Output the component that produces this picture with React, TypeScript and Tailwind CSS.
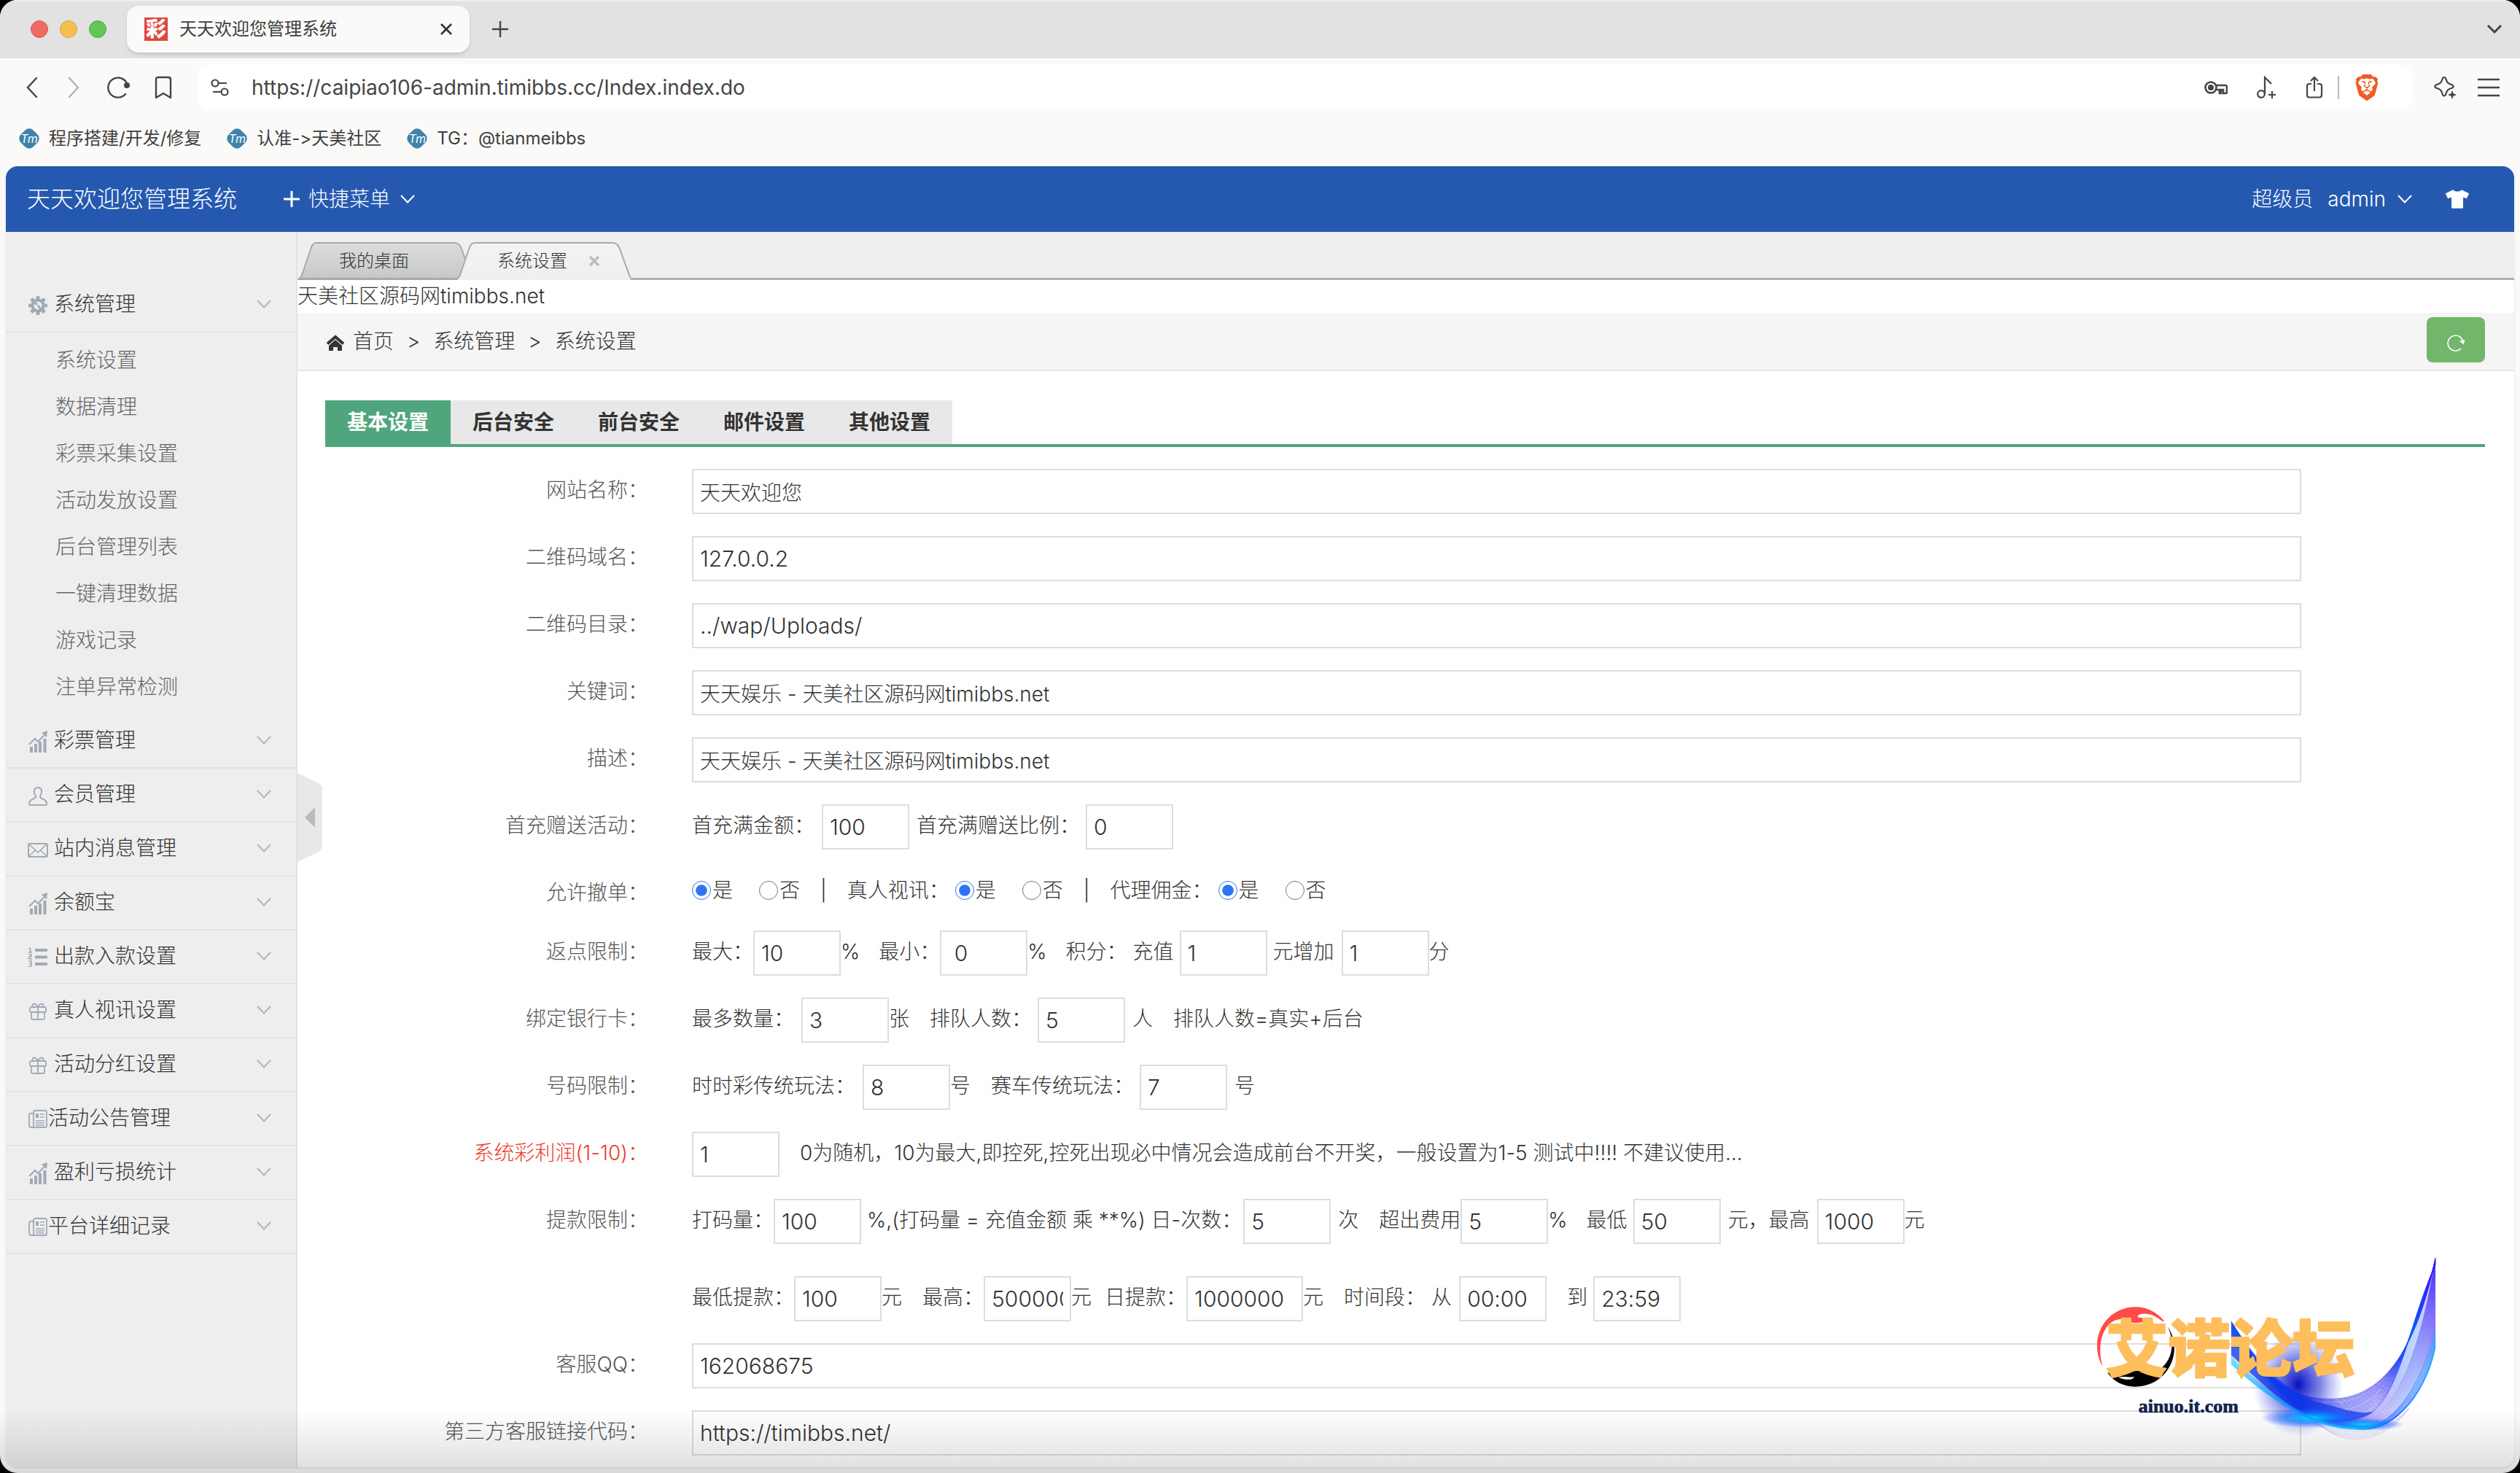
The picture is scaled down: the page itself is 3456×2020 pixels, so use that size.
import type { ReactNode } from "react";
import clsx from "clsx";
import { FaTshirt } from "react-icons/fa";
import { SiBrave } from "react-icons/si";

/* ---------- icons ---------- */

type IconProps = { className?: string };

function ChevronDown({ className }: IconProps) {
  return (
    <svg viewBox="0 0 20 12" className={className} fill="none" stroke="currentColor" strokeWidth="2">
      <path d="M1 1l9 9.500 9-9.500" />
    </svg>
  );
}

function GearIcon() {
  return (
    <svg viewBox="0 0 28 28" className="size-7">
      <g fill="currentColor">
        {[0, 45, 90, 135, 180, 225, 270, 315].map((a) => (
          <rect key={a} x="11.500" y="1" width="5" height="7" rx="1.500" transform={`rotate(${a} 14 14)`} />
        ))}
      </g>
      <circle cx="14" cy="14" r="7.500" fill="none" stroke="currentColor" strokeWidth="4" />
      <path d="M10 10l3 3m1 1l8 10" stroke="currentColor" strokeWidth="3" />
    </svg>
  );
}

function ChartIcon() {
  return (
    <svg viewBox="0 0 28 30" className="h-[30px] w-7">
      <path d="M3 22h4v8H3zM9 18h4v12H9zM15 15h4v15h-4zM21.500 11h4v19h-4z" fill="currentColor" />
      <path d="M2 19l8-8 4 4 9-9" fill="none" stroke="currentColor" strokeWidth="2" />
      <path d="M27 0l-1 9-7-6z" fill="currentColor" />
    </svg>
  );
}

function UserIcon() {
  return (
    <svg viewBox="0 0 28 28" className="size-7" fill="none" stroke="currentColor" strokeWidth="2">
      <path d="M14 3c-4 0-5.500 3-5 6.500.2 2 .6 3 1.800 4.500 1 2-.3 3-2.300 4C4.500 20 2 21 2 25.500c0 .9.500 1.500 1.500 1.500h21c1 0 1.500-.6 1.500-1.500 0-4.500-2.500-5.500-6.500-7.500-2-1-3.300-2-2.300-4 1.200-1.500 1.600-2.500 1.800-4.500C19.500 6 18 3 14 3z" />
    </svg>
  );
}

function MailIcon() {
  return (
    <svg viewBox="0 0 28 28" className="size-7" fill="none" stroke="currentColor" strokeWidth="1.600">
      <rect x="1" y="6" width="26" height="18" rx="2" strokeWidth="2" />
      <path d="M2 7l12 11L26 7M2 23l8.500-8M26 23l-8.500-8" />
    </svg>
  );
}

function ListIcon() {
  return (
    <svg viewBox="0 0 28 28" className="size-7" fill="none" stroke="currentColor">
      <path d="M10 4h17M10 13.500h17M10 23h17" strokeWidth="4" />
      <path d="M1.500 1.500h2V7M1 7h5M1 10h4v3H2v3h4M1 19h4v7H1M2 22.500h3" strokeWidth="1.600" />
    </svg>
  );
}

function GiftIcon() {
  return (
    <svg viewBox="0 0 28 28" className="size-7" fill="none" stroke="currentColor" strokeWidth="1.800">
      <rect x="3" y="8" width="22" height="7" rx="2" />
      <path d="M5 15v8.500c0 1 .5 1.500 1.500 1.500h15c1 0 1.500-.5 1.500-1.500V15M14 8v17M14 8C12 3 6 2 6.500 6c.1 1 1 2 2 2M14 8c2-5 8-6 7.500-2-.1 1-1 2-2 2" />
    </svg>
  );
}

function NewsIcon() {
  return (
    <svg viewBox="0 0 28 28" className="size-7" fill="none" stroke="currentColor" strokeWidth="1.800">
      <rect x="8" y="2" width="18" height="23" rx="2" />
      <path d="M8 6H4C3 6 2 7 2 8v14c0 2 1 3 3 3h6" />
      <path d="M17 7h6M17 11h6M11 16h12M11 19h12M11 22h12" strokeWidth="1.600" />
      <path d="M11 6h4v6h-4z" fill="currentColor" stroke="none" />
    </svg>
  );
}

function BookmarkLogo() {
  return (
    <span className="relative flex size-[30px] items-center justify-center">
      <span className="absolute size-6 rotate-45 rounded-lg bg-[#3f83aa]" />
      <span className="relative text-base leading-none text-white italic">Tm</span>
    </span>
  );
}

/* ---------- browser chrome ---------- */

function TitleBar() {
  return (
    <div className="flex h-20 items-center border-t-2 border-[#efefef] bg-[#e2e2e2] pr-6 pb-[2px] pl-[42px]">
      <div className="flex gap-4">
        <span className="size-6 rounded-full border border-[#d8574c] bg-[#ed6b60]" />
        <span className="size-6 rounded-full border border-[#d9a33e] bg-[#f5bf4f]" />
        <span className="size-6 rounded-full border border-[#51a83f] bg-[#62c655]" />
      </div>
      <div className="ml-7 flex h-16 w-[470px] items-center rounded-2xl bg-[#fbfaf8] pr-5 pl-6 shadow-md">
        <span className="flex size-8 items-center justify-center bg-[#e0463d] text-[28px] leading-none font-black text-white">彩</span>
        <span className="ml-4 flex-1 text-2xl text-[#404040]">天天欢迎您管理系统</span>
        <button aria-label="Close tab" className="p-1 text-[#333]">
          <svg viewBox="0 0 16 16" className="size-4" stroke="currentColor" strokeWidth="2.600"><path d="M1 1l14 14M15 1L1 15" /></svg>
        </button>
      </div>
      <button aria-label="New tab" className="ml-[31px] text-[#444]">
        <svg viewBox="0 0 22 22" className="size-[22px]" stroke="currentColor" strokeWidth="2.400"><path d="M11 0v22M0 11h22" /></svg>
      </button>
      <button aria-label="Search tabs" className="ml-auto text-[#444]">
        <svg viewBox="0 0 22 14" className="h-[14px] w-[22px]" fill="none" stroke="currentColor" strokeWidth="3"><path d="M2 2l9 9 9-9" /></svg>
      </button>
    </div>
  );
}

function AddressBar() {
  return (
    <div className="flex h-20 items-center pr-7 pl-8 text-[#454545]">
      <div className="flex w-[204px] items-center justify-between">
        <button aria-label="Back">
          <svg viewBox="0 0 24 32" className="h-8 w-6" fill="none" stroke="currentColor" strokeWidth="2.400" strokeLinecap="round"><path d="M18 3L6 16l12 13" /></svg>
        </button>
        <button aria-label="Forward" className="text-[#b4b3b1]">
          <svg viewBox="0 0 24 32" className="h-8 w-6" fill="none" stroke="currentColor" strokeWidth="2.400" strokeLinecap="round"><path d="M6 3l12 13L6 29" /></svg>
        </button>
        <button aria-label="Reload">
          <svg viewBox="0 0 32 32" className="size-8" fill="none" stroke="currentColor" strokeWidth="2.400" strokeLinecap="round">
            <path d="M25 25A13.500 13.500 0 1 1 26 8.500" />
            <circle cx="27" cy="13" r="4" fill="currentColor" stroke="none" />
          </svg>
        </button>
        <button aria-label="Bookmark">
          <svg viewBox="0 0 24 32" className="h-8 w-6" fill="none" stroke="currentColor" strokeWidth="2.400" strokeLinejoin="round"><path d="M2 30V5c0-2 1-3 3-3h14c2 0 3 1 3 3v25l-10-6z" /></svg>
        </button>
      </div>
      <div className="ml-[35px] flex h-16 flex-1 items-center rounded-2xl bg-white pr-[44px] pl-[18px]">
        <svg viewBox="0 0 26 26" className="size-[26px]" fill="none" stroke="currentColor" strokeWidth="2.200">
          <circle cx="6" cy="7" r="4.500" />
          <circle cx="19" cy="19" r="4.500" />
          <path d="M11 7h11M3 19h11" />
        </svg>
        <input aria-label="Address" defaultValue="https://caipiao106-admin.timibbs.cc/Index.index.do" className="ml-[30px] flex-1 bg-transparent text-[28px] text-[#454545] outline-none" />
        <div className="flex items-center">
          <svg viewBox="0 0 32 20" className="h-5 w-8" fill="none" stroke="currentColor" strokeWidth="2.600">
            <path d="M16 7h13c1 0 2 1 2 2v7c0 1-.5 2-2 2h-3v-5h-3v5h-2v-5h-5" />
            <circle cx="9" cy="10" r="7.500" />
            <circle cx="9" cy="10" r="4" fill="currentColor" stroke="none" />
          </svg>
          <svg viewBox="0 0 28 32" className="ml-[39px] h-8 w-7" fill="none" stroke="currentColor" strokeWidth="2.200">
            <circle cx="7" cy="25" r="4.800" />
            <path d="M12 25V2l9 9M22 21v10M17 26h10" />
          </svg>
          <svg viewBox="0 0 24 32" className="ml-10 h-8 w-6" fill="none" stroke="currentColor" strokeWidth="2.200">
            <path d="M8 11H5c-2 0-3 1-3 3v12c0 2 1 3.500 3 3.500h14c2 0 3-1.500 3-3.500V14c0-2-1-3-3-3h-3M12 21V2M7 7l5-5 5 5" />
          </svg>
          <span className="ml-5 h-8 w-[2px] bg-[#bbb]" />
          <SiBrave className="ml-5 size-9 text-[#f15a22]" />
        </div>
      </div>
      <button aria-label="Leo" className="ml-[30px]">
        <svg viewBox="0 0 32 32" className="size-8" fill="none" stroke="currentColor" strokeWidth="2.200" strokeLinejoin="round">
          <path d="M14 2c1.500 0 2 .8 2.500 2.500 1.500 5 2.500 6 7.500 7.500 3.500 1 3.500 4 0 5-5 1.500-6 2.500-7.500 7.500-1 4-4 4-5 0-1.500-5-2.500-6-7.500-7.500-3.500-1-3.500-4 0-5 5-1.500 6-2.500 7.500-7.500C12 2.800 12.500 2 14 2z" />
          <path d="M25 21c.8 3.500 1.500 4.200 5 5-3.500.8-4.200 1.500-5 5-.8-3.500-1.500-4.200-5-5 3.500-.8 4.200-1.500 5-5z" fill="currentColor" strokeWidth="1" />
        </svg>
      </button>
      <button aria-label="Menu" className="ml-7">
        <svg viewBox="0 0 30 26" className="h-[26px] w-[30px]" stroke="currentColor" strokeWidth="2.400"><path d="M0 2h30M0 13h30M0 24h30" /></svg>
      </button>
    </div>
  );
}

const bookmarks = ["程序搭建/开发/修复", "认准->天美社区", "TG：@tianmeibbs"];

function BookmarksBar() {
  return (
    <div className="flex h-[68px] items-start gap-[34px] pt-[15px] pl-[25px]">
      {bookmarks.map((b) => (
        <a key={b} href="#" className="flex items-center gap-3 text-2xl leading-[30px] text-[#404040]">
          <BookmarkLogo />
          {b}
        </a>
      ))}
    </div>
  );
}

/* ---------- admin page ---------- */

function PageHeader() {
  return (
    <header className="flex h-[90px] items-center bg-[#2559b0] pr-[62px] pl-[29px] text-[28px] text-white">
      <h1 className="text-[32px]">天天欢迎您管理系统</h1>
      <button className="ml-16 flex items-center">
        <svg viewBox="0 0 22 22" className="size-[22px]" stroke="currentColor" strokeWidth="3"><path d="M11 0v22M0 11h22" /></svg>
        <span className="ml-3">快捷菜单</span>
        <ChevronDown className="ml-[14px] h-3 w-5" />
      </button>
      <div className="ml-auto flex items-center">
        <span>超级员</span>
        <button className="ml-5 flex items-center">
          admin
          <ChevronDown className="ml-4 h-3 w-5" />
        </button>
        <button aria-label="Skin" className="ml-[46px]">
          <FaTshirt className="size-8" />
        </button>
      </div>
    </header>
  );
}

const systemLinks = ["系统设置", "数据清理", "彩票采集设置", "活动发放设置", "后台管理列表", "一键清理数据", "游戏记录", "注单异常检测"];

const sections: { label: string; icon: ReactNode; tight?: boolean }[] = [
  { label: "彩票管理", icon: <ChartIcon /> },
  { label: "会员管理", icon: <UserIcon /> },
  { label: "站内消息管理", icon: <MailIcon /> },
  { label: "余额宝", icon: <ChartIcon /> },
  { label: "出款入款设置", icon: <ListIcon /> },
  { label: "真人视讯设置", icon: <GiftIcon /> },
  { label: "活动分红设置", icon: <GiftIcon /> },
  { label: "活动公告管理", icon: <NewsIcon />, tight: true },
  { label: "盈利亏损统计", icon: <ChartIcon /> },
  { label: "平台详细记录", icon: <NewsIcon />, tight: true },
];

function SectionHead({ label, icon, tight }: { label: string; icon: ReactNode; tight?: boolean }) {
  return (
    <button className="flex h-[74px] w-full items-center border-b-2 border-[#e3e3e3] pr-[34px] pb-[2px] pl-[30px] text-left text-[#333]">
      <span className="pt-1 text-[#a2a9b6]">{icon}</span>
      <span className={tight ? "" : "ml-2"}>{label}</span>
      <ChevronDown className="ml-auto h-3 w-5 text-[#b5b5b5]" />
    </button>
  );
}

function Sidebar() {
  return (
    <aside className="w-[400px] shrink-0 border-r-2 border-[#e3e3e3] bg-[#eee] pt-16 text-[28px]">
      <SectionHead label="系统管理" icon={<GearIcon />} />
      <ul className="py-[6px] pl-[68px] text-[#666]">
        {systemLinks.map((l) => (
          <li key={l} className="h-16 leading-[64px]">
            <a href="#">{l}</a>
          </li>
        ))}
      </ul>
      {sections.map((s) => (
        <SectionHead key={s.label} {...s} />
      ))}
    </aside>
  );
}

function PageTab({ label, active }: { label: string; active?: boolean }) {
  return (
    <div className={clsx("relative flex h-[52px] w-[242px] items-center pl-[57px] text-2xl text-[#333]", active && "z-10 -ml-[25px]")}>
      <svg viewBox="0 0 242 52" className="absolute inset-0 h-[52px] w-[242px]">
        <defs>
          <linearGradient id={active ? "tabOn" : "tabOff"} x1="0" y1="0" x2="0" y2="1">
            <stop offset="0" stopColor={active ? "#f2f3f2" : "#dcdedc"} />
            <stop offset="1" stopColor={active ? "#efeff1" : "#c6c6c8"} />
          </linearGradient>
        </defs>
        <path d="M0 52Q4 50 6 45L19 7Q21 1 27 1H215Q221 1 224 7L238 45Q240 50 242 52Z" fill={active ? "url(#tabOn)" : "url(#tabOff)"} />
        <path d="M0 52Q4 50 6 45L19 7Q21 1 27 1H215Q221 1 224 7L238 45Q240 50 242 52" fill="none" stroke="#a9a9a9" strokeWidth="2" />
        {!active && <path d="M2 50.500H240" stroke="#a9a9a9" strokeWidth="3" />}
      </svg>
      <button className="relative">{label}</button>
      {active && (
        <button aria-label="Close" className="relative ml-[30px] text-[#b9bec4]">
          <svg viewBox="0 0 14 14" className="size-[14px]" stroke="currentColor" strokeWidth="3.500"><path d="M1 1l12 12M13 1L1 13" /></svg>
        </button>
      )}
    </div>
  );
}

function Breadcrumb() {
  return (
    <nav className="flex h-20 items-center border-b-2 border-[#e5e5e5] bg-[#f5f5f5] pr-10 pl-[39px] text-[28px] text-[#333]">
      <svg viewBox="0 0 26 22" className="mt-1 h-[22px] w-[26px]">
        <path d="M2 12.500L13 3l11 9.500" fill="none" stroke="currentColor" strokeWidth="4" />
        <path d="M4 15l9-8 9 8v7h-6v-5h-6v5H4z" fill="currentColor" />
      </svg>
      <a href="#" className="ml-[11px]">首页</a>
      <span className="mx-[18px]">&gt;</span>
      <a href="#">系统管理</a>
      <span className="mx-[18px]">&gt;</span>
      <span>系统设置</span>
      <button aria-label="Refresh" className="mb-1 ml-auto flex h-[62px] w-20 items-center justify-center rounded-lg bg-[#73b66b] pt-2 text-white">
        <svg viewBox="0 0 24 24" className="size-6" fill="none" stroke="currentColor" strokeWidth="1.600">
          <path d="M19 20A10.500 10.500 0 1 1 22 11" />
          <path d="M18.500 10l3.500 3 2-4z" fill="currentColor" />
        </svg>
      </button>
    </nav>
  );
}

const tabs = ["基本设置", "后台安全", "前台安全", "邮件设置", "其他设置"];

function Row({ label, htmlFor, danger, className, children }: { label: string; htmlFor?: string; danger?: boolean; className?: string; children: ReactNode }) {
  return (
    <div className={clsx("flex", className)}>
      <label htmlFor={htmlFor} className={clsx("w-[443px] shrink-0 text-right leading-[58px]", danger ? "text-[#f0382a]" : "text-[#555]")}>
        {label}
      </label>
      <div className="ml-[60px] min-w-0 flex-1">{children}</div>
    </div>
  );
}

const inputStyle = "h-[62px] border-2 border-[#ddd] bg-white px-[9px] text-[#333] outline-none";

function WideRow({ label, id, value, size = "text-[30px]" }: { label: string; id: string; value: string; size?: string }) {
  return (
    <Row label={label} htmlFor={id}>
      <input id={id} defaultValue={value} className={clsx(inputStyle, size, "block w-full")} />
    </Row>
  );
}

// caption followed by a short input, wrapped in a label so they stay tied
function Field({ label, value, className, gap = "ml-2", width = "w-[120px]" }: { label: string; value: string; className?: string; gap?: string; width?: string }) {
  return (
    <label className={clsx("flex", className)}>
      <span className="whitespace-pre">{label}</span>
      <input defaultValue={value} className={clsx(inputStyle, "text-[30px]", gap, width)} />
    </label>
  );
}

function Line({ children }: { children: ReactNode }) {
  return <div className="flex items-start leading-[58px] whitespace-pre">{children}</div>;
}

function YesNo({ name, className }: { name: string; className?: string }) {
  return (
    <>
      <label className={clsx("flex items-center", className)}>
        <input type="radio" name={name} defaultChecked className="size-[26px] accent-[#2f73f6]" />
        <span className="ml-[2px]">是</span>
      </label>
      <label className="ml-9 flex items-center">
        <input type="radio" name={name} className="size-[26px] accent-[#2f73f6]" />
        <span className="ml-[2px]">否</span>
      </label>
    </>
  );
}

function SettingsForm() {
  return (
    <form className="mt-[30px] flex flex-col gap-[30px] pr-[252px] text-[28px] text-[#333]">
      <WideRow label="网站名称：" id="site-name" value="天天欢迎您" size="text-[28px]" />
      <WideRow label="二维码域名：" id="qr-domain" value="127.0.0.2" />
      <WideRow label="二维码目录：" id="qr-dir" value="../wap/Uploads/" />
      <WideRow label="关键词：" id="keywords" value="天天娱乐 - 天美社区源码网timibbs.net" size="text-[28px]" />
      <WideRow label="描述：" id="description" value="天天娱乐 - 天美社区源码网timibbs.net" size="text-[28px]" />
      <Row label="首充赠送活动：">
        <Line>
          <Field label="首充满金额：" value="100" gap="ml-[10px]" />
          <Field label="首充满赠送比例：" value="0" className="ml-[10px]" />
        </Line>
      </Row>
      <Row label="允许撤单：" className="h-[51px]">
        <div className="flex h-[51px] items-center">
          <YesNo name="cancel" />
          <span className="mx-7">|</span>
          <span>真人视讯：</span>
          <YesNo name="live" className="ml-2" />
          <span className="mx-7">|</span>
          <span>代理佣金：</span>
          <YesNo name="agent" className="ml-2" />
        </div>
      </Row>
      <Row label="返点限制：">
        <Line>
          <Field label="最大：" value="10" gap="ml-0" />
          <span>%</span>
          <Field label="最小：" value=" 0" className="ml-[26px]" gap="ml-0" />
          <span>%</span>
          <span className="ml-[26px]">积分：</span>
          <Field label="充值" value="1" className="ml-2" />
          <Field label="元增加" value="1" className="ml-2" gap="ml-[10px]" />
          <span>分</span>
        </Line>
      </Row>
      <Row label="绑定银行卡：">
        <Line>
          <Field label="最多数量：" value="3" gap="ml-[10px]" />
          <span>张</span>
          <Field label="排队人数：" value="5" className="ml-7" />
          <span className="ml-[10px]">人</span>
          <span className="ml-7">排队人数=真实+后台</span>
        </Line>
      </Row>
      <Row label="号码限制：">
        <Line>
          <Field label="时时彩传统玩法：" value="8" gap="ml-[10px]" />
          <span>号</span>
          <Field label="赛车传统玩法：" value="7" className="ml-7" />
          <span className="ml-[10px]">号</span>
        </Line>
      </Row>
      <Row label="系统彩利润(1-10)：" htmlFor="profit" danger>
        <Line>
          <input id="profit" defaultValue="1" className={clsx(inputStyle, "w-[120px] text-[30px]")} />
          <span className="ml-7">0为随机，10为最大,即控死,控死出现必中情况会造成前台不开奖，一般设置为1-5 测试中!!!! 不建议使用...</span>
        </Line>
      </Row>
      <Row label="提款限制：">
        <Line>
          <Field label="打码量：" value="100" gap="ml-0" />
          <Field label="%,(打码量 = 充值金额 乘 **%) 日-次数：" value="5" className="ml-2" gap="ml-[2px]" />
          <span className="ml-[10px]">次</span>
          <Field label="超出费用" value="5" className="ml-7" gap="ml-0" />
          <span>%</span>
          <Field label="最低" value="50" className="ml-[26px]" />
          <Field label="元，最高" value="1000" className="ml-[10px]" gap="ml-[10px]" />
          <span>元</span>
        </Line>
        <div className="mt-11">
          <Line>
            <Field label="最低提款：" value="100" gap="ml-0" />
            <span>元</span>
            <Field label="最高：" value="5000000" className="ml-7" gap="ml-0" />
            <span>元</span>
            <Field label="日提款：" value="1000000" className="ml-[18px]" gap="ml-0" width="w-[160px]" />
            <span>元</span>
            <span className="ml-7">时间段：</span>
            <Field label="从" value="00:00" className="ml-2" gap="ml-[10px]" />
            <Field label="到" value="23:59" className="ml-7" />
          </Line>
        </div>
      </Row>
      <WideRow label="客服QQ：" id="qq" value="162068675" />
      <WideRow label="第三方客服链接代码：" id="chat-link" value="https://timibbs.net/" />
    </form>
  );
}

/* ---------- floating forum logo ---------- */

// point lists of equal length, blended to draw the ribbon's strands
const inner = [600, 290, 760, 560, 860, 610, 1010, 610, 1180, 610, 1350, 480, 1440, 30];
const outer = [600, 465, 800, 650, 960, 735, 1140, 735, 1290, 735, 1410, 560, 1440, 390];
const core = [600, 370, 760, 500, 840, 700, 1080, 700, 1290, 700, 1310, 340, 1440, 60];

function strand(a: number[], b: number[], t: number) {
  const p = a.map((v, i) => Math.round(v + (b[i] - v) * t));
  return `M${p[0]} ${p[1]}C${p.slice(2, 8).join(" ")}C${p.slice(8, 14).join(" ")}`;
}

const steps = Array.from({ length: 30 }, (_, i) => i / 29);

function ForumLogo() {
  return (
    <svg viewBox="0 0 1500 825" className="pointer-events-none absolute right-24 bottom-[30px] z-20 h-[275px] w-[500px]">
      <defs>
        <radialGradient id="glow">
          <stop offset="0" stopColor="#0510c0" />
          <stop offset="0.500" stopColor="#2a36d8" stopOpacity="0.600" />
          <stop offset="1" stopColor="#5560ee" stopOpacity="0" />
        </radialGradient>
        <radialGradient id="cyan">
          <stop offset="0" stopColor="#05d2ff" />
          <stop offset="0.500" stopColor="#0a80ff" stopOpacity="0.700" />
          <stop offset="1" stopColor="#2a50ff" stopOpacity="0" />
        </radialGradient>
        <linearGradient id="ribbon" gradientUnits="userSpaceOnUse" x1="600" y1="400" x2="1440" y2="300">
          <stop offset="0" stopColor="#0a7dff" />
          <stop offset="0.300" stopColor="#0a22e0" />
          <stop offset="0.700" stopColor="#3a2cf0" />
          <stop offset="0.880" stopColor="#0a5cff" />
          <stop offset="1" stopColor="#3418ff" />
        </linearGradient>
        <linearGradient id="tip" x1="0" y1="0" x2="0" y2="1">
          <stop offset="0" stopColor="#2a10ff" stopOpacity="0.900" />
          <stop offset="0.500" stopColor="#5a48f0" stopOpacity="0.450" />
          <stop offset="1" stopColor="#8a80f5" stopOpacity="0" />
        </linearGradient>
        <linearGradient id="edge" gradientUnits="userSpaceOnUse" x1="600" y1="0" x2="1440" y2="0">
          <stop offset="0" stopColor="#30e0ff" />
          <stop offset="0.350" stopColor="#0a90ff" />
          <stop offset="0.600" stopColor="#08d0ff" />
          <stop offset="0.800" stopColor="#0a50ff" />
          <stop offset="1" stopColor="#10b8ff" />
        </linearGradient>
      </defs>
      <ellipse cx="875" cy="550" rx="185" ry="215" fill="url(#glow)" />
      <path d="M1440 30V390C1410 560 1290 735 1140 700C1300 640 1380 380 1440 30Z" fill="url(#tip)" />
      <g fill="none" strokeWidth="2" stroke="url(#ribbon)">
        {steps.map((t) => (
          <path key={t} d={strand(inner, core, t)} opacity="0.850" />
        ))}
        {steps.map((t) => (
          <path key={t} d={strand(core, outer, t)} opacity="0.550" />
        ))}
      </g>
      <path d="M600 290C720 480 830 580 960 625C1060 650 1130 680 1190 660C1100 720 960 720 880 660C760 590 680 500 600 430Z" fill="#0a35e8" opacity="0.700" />
      <g fill="none" stroke="#5a50f0" strokeWidth="1.500" opacity="0.400">
        {[0, 10, 20, 30, 40, 50].map((d) => (
          <path key={d} d={`M${900 + d} 690C${1000 + d / 2} ${760 + d} ${1240 - d / 3} ${760 + d} 1330 650`} />
        ))}
      </g>
      <ellipse cx="930" cy="688" rx="210" ry="42" fill="url(#cyan)" />
      <ellipse cx="1140" cy="715" rx="170" ry="26" fill="url(#cyan)" />
      <g fill="none" stroke="url(#edge)">
        <path d={strand(inner, outer, 1)} strokeWidth="5" />
        {[0.8, 0.85, 0.9, 0.95].map((t) => (
          <path key={t} d={strand(core, outer, t)} strokeWidth="4" opacity="0.500" />
        ))}
      </g>
      {/* hands round the first character */}
      <path d="M325 290C290 250 250 232 207 232C115 232 48 305 48 392C48 425 58 455 71 476C40 370 85 283 145 282C165 285 175 296 205 298C235 296 260 288 279 298C277 280 245 276 218 275C208 268 225 258 250 260C285 262 305 285 320 291Z" fill="#ff4b4a" />
      <path d="M90 501C115 540 160 560 205 560C300 560 366 485 366 400C366 370 356 340 340 314C380 410 340 480 270 510C240 490 200 490 175 505C150 510 115 515 90 501ZM135 521C165 515 185 525 200 518C198 533 170 535 135 521Z" fill="#000" fillRule="evenodd" />
      <text x="84" y="497" fontSize="256" fontWeight="900" fill="#ffbe5c" stroke="#ffbe5c" strokeWidth="6" strokeLinejoin="round" className="drop-shadow-sm">
        艾诺论坛
      </text>
      <text x="218" y="665" fontSize="78" fontWeight="700" fill="#14204a" stroke="#14204a" strokeWidth="2" fontFamily="Liberation Serif, serif">
        ainuo.it.com
      </text>
    </svg>
  );
}

export default function App() {
  return (
    <div className="min-h-screen bg-black font-['Inter','Noto_Sans_CJK_SC',sans-serif] [font-feature-settings:'calt'_0]" lang="zh-CN">
      <div className="relative flex min-h-screen flex-col overflow-hidden rounded-3xl bg-[#fbfaf8]">
        <TitleBar />
        <AddressBar />
        <BookmarksBar />
        <div className="mx-2 mb-2 flex flex-1 flex-col overflow-hidden rounded-2xl bg-white font-light shadow">
          <PageHeader />
          <div className="flex flex-1">
            <Sidebar />
            <main className="relative flex min-w-0 flex-1 flex-col">
              <div className="flex h-[66px] items-end bg-[#efeff1]">
                <PageTab label="我的桌面" />
                <PageTab label="系统设置" active />
                <div className="flex-1 border-b-[3px] border-[#b0b0b0]" />
              </div>
              <p className="h-[45px] text-[28px] leading-[45px] text-[#333]">天美社区源码网timibbs.net</p>
              <Breadcrumb />
              <div className="px-10 pt-10 pb-4 pl-[38px]">
                <div role="tablist" className="flex border-b-4 border-[#4fa67d]">
                  {tabs.map((t, i) => (
                    <button
                      key={t}
                      role="tab"
                      type="button"
                      aria-selected={i === 0}
                      className={clsx("h-[60px] px-[30px] text-[28px] font-bold", i === 0 ? "bg-[#4fa67d] text-white" : "bg-[#e8e8e8] text-[#333]")}
                    >
                      {t}
                    </button>
                  ))}
                </div>
                <SettingsForm />
              </div>
              <button aria-label="Collapse sidebar" className="absolute top-[742px] left-0">
                <svg viewBox="0 0 34 122" className="h-[122px] w-[34px]">
                  <path d="M0 0L29 14Q34 17 34 22V100Q34 105 29 108L0 122Z" fill="#e8e8e8" />
                  <path d="M10 61L24 47V75Z" fill="#bbb" />
                </svg>
              </button>
            </main>
          </div>
        </div>
        <div className="pointer-events-none absolute inset-x-0 bottom-0 h-22 bg-linear-to-b from-transparent to-black/13" />
        <ForumLogo />
      </div>
    </div>
  );
}
